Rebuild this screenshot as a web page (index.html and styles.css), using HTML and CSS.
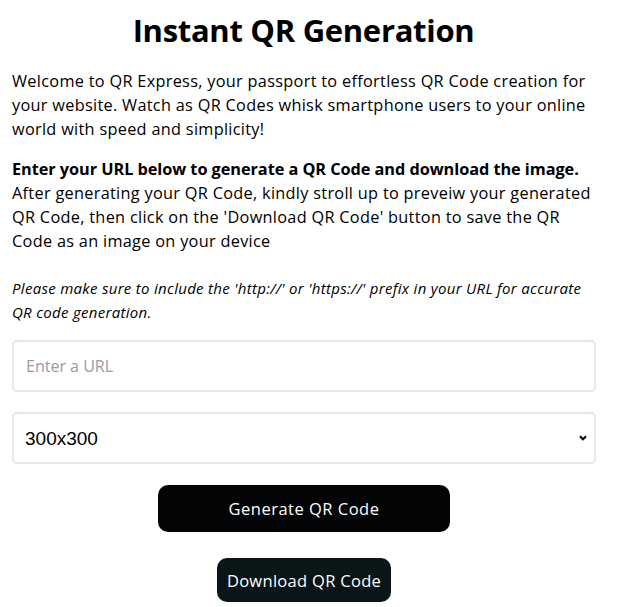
FILE: index.html
```html
<!DOCTYPE html>
<html lang="en">
<head>
<meta charset="utf-8">
<title>Instant QR Generation</title>
<link rel="stylesheet" href="styles.css">
</head>
<body>
<main class="page">
  <h1 class="title">Instant QR Generation</h1>
  <p class="intro">Welcome to QR Express, your passport to effortless QR Code creation for your website. Watch as QR Codes whisk smartphone users to your online world with speed and simplicity!</p>
  <p class="intro intro-steps"><strong>Enter your URL below to generate a QR Code and download the image.</strong> After generating your QR Code, kindly stroll up to preveiw your generated QR Code, then click on the 'Download QR Code' button to save the QR Code as an image on your device</p>
  <p class="note">Please make sure to include the 'http://' or 'https://' prefix in your URL for accurate QR code generation.</p>
  <form class="form">
    <input class="field" type="text" placeholder="Enter a URL">
    <div class="select-wrap">
      <select class="field select">
        <option>300x300</option>
      </select>
      <svg class="chev" width="8" height="6" viewBox="0 0 8 6"><path d="M1 1.2 L4 4.3 L7 1.2" fill="none" stroke="#000" stroke-width="2"/></svg>
    </div>
    <button type="button" class="btn btn-generate">Generate QR Code</button>
    <button type="button" class="btn btn-download">Download QR Code</button>
  </form>
</main>
</body>
</html>
```

FILE: styles.css
```css
html, body {
  margin: 0;
  padding: 0;
  background: #fff;
}
body {
  font-family: "Open Sans", "DejaVu Sans", sans-serif;
  color: #000;
}
.page {
  padding: 6px 12px 0 12px;
}
.title {
  margin: 0;
  text-align: center;
  font-size: 31px;
  line-height: 48px;
  font-weight: 700;
  letter-spacing: -0.3px;
  padding-right: 10px;
}
.intro {
  margin: 15px 0 0 0;
  font-size: 16.3px;
  line-height: 24px;
  letter-spacing: 0.3px;
}
.intro-steps {
  margin-top: 16px;
  padding-right: 12px;
}
.intro strong {
  font-weight: 700;
  letter-spacing: -0.05px;
}
.note {
  margin: 23px 0 0 0;
  font-size: 15px;
  line-height: 24px;
  font-style: italic;
  letter-spacing: 0.3px;
  padding-right: 20px;
}
.form {
  margin-top: 16px;
  width: 584px;
  display: flex;
  flex-direction: column;
  align-items: center;
}
.field {
  box-sizing: border-box;
  width: 584px;
  height: 52px;
  border: 2px solid #e6e6eb;
  border-radius: 5px;
  padding: 0 12px;
  font-family: "Open Sans", sans-serif;
  font-size: 16px;
  background: #fff;
  color: #000;
  outline: none;
}
.field::placeholder {
  color: #9a9ba6;
}
.select-wrap {
  position: relative;
  margin-top: 20px;
}
.select {
  display: block;
  appearance: none;
  -webkit-appearance: none;
  font-family: "Liberation Sans", Arial, sans-serif;
  font-size: 19px;
  padding-left: 11px;
}
.chev {
  position: absolute;
  right: 9px;
  top: 23px;
  pointer-events: none;
}
.btn {
  border: none;
  color: #fff;
  font-family: "Open Sans", sans-serif;
  font-size: 16.5px;
  border-radius: 10px;
  cursor: pointer;
}
.btn-generate {
  margin-top: 21px;
  width: 292px;
  height: 47px;
  background: #020405;
  letter-spacing: 0.5px;
}
.btn-download {
  margin-top: 26px;
  width: 174px;
  height: 44px;
  background: #0a1518;
  letter-spacing: 0.3px;
}
```
